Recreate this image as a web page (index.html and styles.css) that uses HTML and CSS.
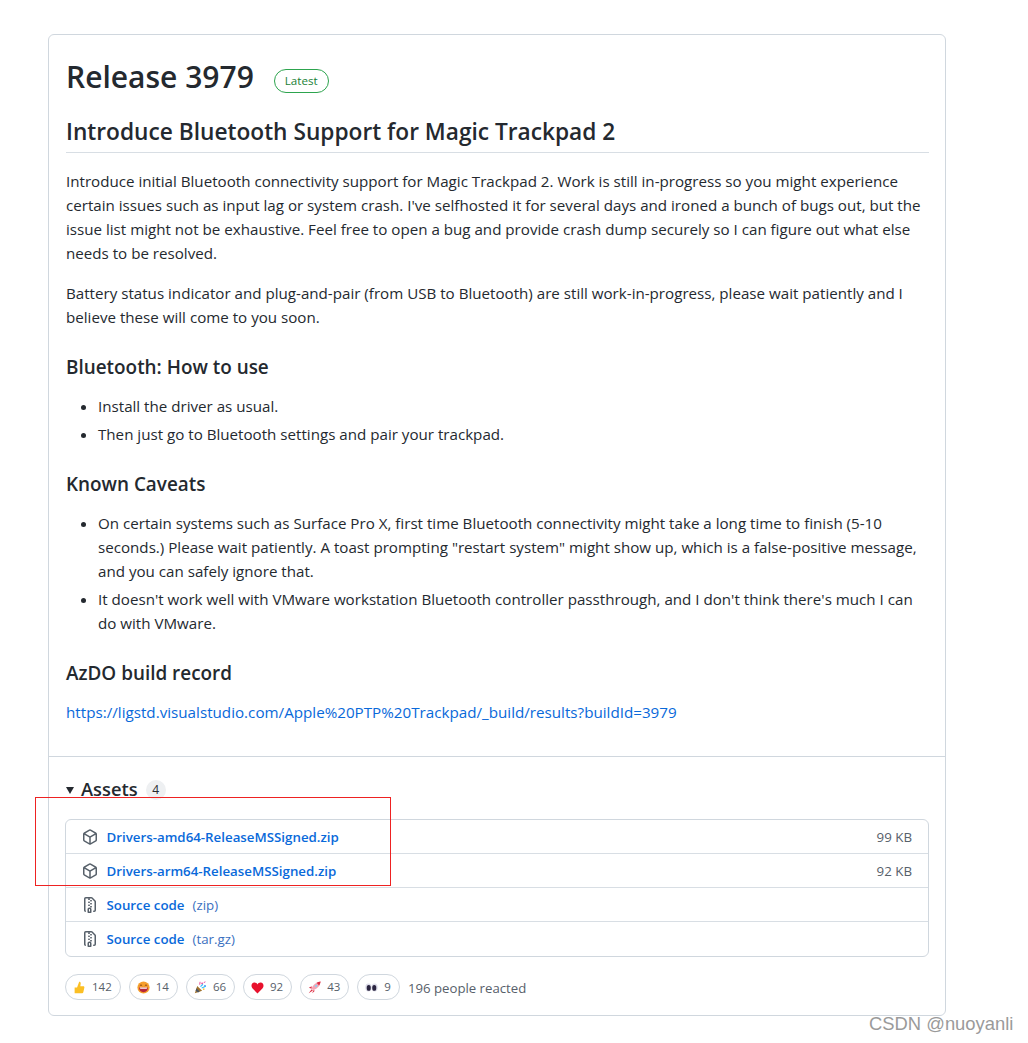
FILE: index.html
```html
<!DOCTYPE html>
<html>
<head>
    <title>Release 3979</title>
    <link rel="stylesheet" href="styles.css">
</head>
<body>
    <div class="release-card">
        <div class="release-body">
            <div class="release-title">
                <h1>Release 3979</h1>
                <span class="label-latest">Latest</span>
            </div>
            <h2 class="section-head">Introduce Bluetooth Support for Magic Trackpad 2</h2>
            <p>Introduce initial Bluetooth connectivity support for Magic Trackpad 2. Work is still in-progress so you might experience<br>certain issues such as input lag or system crash. I've selfhosted it for several days and ironed a bunch of bugs out, but the<br>issue list might not be exhaustive. Feel free to open a bug and provide crash dump securely so I can figure out what else<br>needs to be resolved.</p>
            <p>Battery status indicator and plug-and-pair (from USB to Bluetooth) are still work-in-progress, please wait patiently and I<br>believe these will come to you soon.</p>
            <h3>Bluetooth: How to use</h3>
            <ul>
                <li>Install the driver as usual.</li>
                <li>Then just go to Bluetooth settings and pair your trackpad.</li>
            </ul>
            <h3>Known Caveats</h3>
            <ul>
                <li>On certain systems such as Surface Pro X, first time Bluetooth connectivity might take a long time to finish (5-10<br>seconds.) Please wait patiently. A toast prompting "restart system" might show up, which is a false-positive message,<br>and you can safely ignore that.</li>
                <li>It doesn't work well with VMware workstation Bluetooth controller passthrough, and I don't think there's much I can<br>do with VMware.</li>
            </ul>
            <h3>AzDO build record</h3>
            <p class="last"><a href="#">https://ligstd.visualstudio.com/Apple%20PTP%20Trackpad/_build/results?buildId=3979</a></p>
        </div>

        <div class="assets">
            <div class="assets-head">
                <span class="caret"></span>
                <span class="assets-title">Assets</span>
                <span class="counter">4</span>
            </div>
            <div class="asset-list">
                <div class="asset-row">
                    <svg class="icon" viewBox="0 0 16 16"><path fill="#57606a" fill-rule="evenodd" d="M8.878.392a1.75 1.75 0 00-1.756 0l-5.25 3.045A1.75 1.75 0 001 4.951v6.098c0 .624.332 1.2.872 1.514l5.25 3.045a1.75 1.75 0 001.756 0l5.25-3.045c.54-.313.872-.89.872-1.514V4.951c0-.624-.332-1.2-.872-1.514L8.878.392zM7.875 1.69a.25.25 0 01.25 0l4.63 2.685L8 7.133 3.245 4.375l4.63-2.685zM2.5 5.677v5.372c0 .09.047.171.125.216l4.625 2.683V8.432L2.5 5.677zm6.25 8.271l4.625-2.683a.25.25 0 00.125-.216V5.677L8.75 8.432v5.516z"/></svg>
                    <a class="asset-name" href="#">Drivers-amd64-ReleaseMSSigned.zip</a>
                    <span class="asset-size">99 KB</span>
                </div>
                <div class="asset-row">
                    <svg class="icon" viewBox="0 0 16 16"><path fill="#57606a" fill-rule="evenodd" d="M8.878.392a1.75 1.75 0 00-1.756 0l-5.25 3.045A1.75 1.75 0 001 4.951v6.098c0 .624.332 1.2.872 1.514l5.25 3.045a1.75 1.75 0 001.756 0l5.25-3.045c.54-.313.872-.89.872-1.514V4.951c0-.624-.332-1.2-.872-1.514L8.878.392zM7.875 1.69a.25.25 0 01.25 0l4.63 2.685L8 7.133 3.245 4.375l4.63-2.685zM2.5 5.677v5.372c0 .09.047.171.125.216l4.625 2.683V8.432L2.5 5.677zm6.25 8.271l4.625-2.683a.25.25 0 00.125-.216V5.677L8.75 8.432v5.516z"/></svg>
                    <a class="asset-name" href="#">Drivers-arm64-ReleaseMSSigned.zip</a>
                    <span class="asset-size">92 KB</span>
                </div>
                <div class="asset-row">
                    <svg class="icon" viewBox="0 0 16 16"><path fill="#57606a" fill-rule="evenodd" d="M3.5 1.75a.25.25 0 01.25-.25h3a.75.75 0 000 1.5h.5a.75.75 0 000-1.5h2.086a.25.25 0 01.177.073l2.914 2.914a.25.25 0 01.073.177v8.586a.25.25 0 01-.25.25h-.5a.75.75 0 000 1.5h.5A1.75 1.75 0 0014 13.25V4.664c0-.464-.184-.909-.513-1.237L10.573.513A1.75 1.75 0 009.336 0H3.75A1.75 1.75 0 002 1.75v11.5c0 .649.353 1.214.874 1.515a.75.75 0 10.752-1.298.25.25 0 01-.126-.217V1.75zM8.75 3a.75.75 0 000 1.5h.5a.75.75 0 000-1.5h-.5zM6 5.25a.75.75 0 01.75-.75h.5a.75.75 0 010 1.5h-.5A.75.75 0 016 5.25zm2 1.5A.75.75 0 018.75 6h.5a.75.75 0 010 1.5h-.5A.75.75 0 018 6.75zm-1.25.75a.75.75 0 000 1.5h.5a.75.75 0 000-1.5h-.5zM8 9.75A.75.75 0 018.75 9h.5a.75.75 0 010 1.5h-.5A.75.75 0 018 9.75zm-.75.75a1.75 1.75 0 00-1.75 1.75v3c0 .414.336.75.75.75h2.5a.75.75 0 00.75-.75v-3a1.75 1.75 0 00-1.75-1.75h-.5zM7 12.25a.25.25 0 01.25-.25h.5a.25.25 0 01.25.25v2.25H7v-2.25z"/></svg>
                    <a class="asset-name" href="#">Source code</a>
                    <a class="asset-ext" href="#">(zip)</a>
                </div>
                <div class="asset-row">
                    <svg class="icon" viewBox="0 0 16 16"><path fill="#57606a" fill-rule="evenodd" d="M3.5 1.75a.25.25 0 01.25-.25h3a.75.75 0 000 1.5h.5a.75.75 0 000-1.5h2.086a.25.25 0 01.177.073l2.914 2.914a.25.25 0 01.073.177v8.586a.25.25 0 01-.25.25h-.5a.75.75 0 000 1.5h.5A1.75 1.75 0 0014 13.25V4.664c0-.464-.184-.909-.513-1.237L10.573.513A1.75 1.75 0 009.336 0H3.75A1.75 1.75 0 002 1.75v11.5c0 .649.353 1.214.874 1.515a.75.75 0 10.752-1.298.25.25 0 01-.126-.217V1.75zM8.75 3a.75.75 0 000 1.5h.5a.75.75 0 000-1.5h-.5zM6 5.25a.75.75 0 01.75-.75h.5a.75.75 0 010 1.5h-.5A.75.75 0 016 5.25zm2 1.5A.75.75 0 018.75 6h.5a.75.75 0 010 1.5h-.5A.75.75 0 018 6.75zm-1.25.75a.75.75 0 000 1.5h.5a.75.75 0 000-1.5h-.5zM8 9.75A.75.75 0 018.75 9h.5a.75.75 0 010 1.5h-.5A.75.75 0 018 9.75zm-.75.75a1.75 1.75 0 00-1.75 1.75v3c0 .414.336.75.75.75h2.5a.75.75 0 00.75-.75v-3a1.75 1.75 0 00-1.75-1.75h-.5zM7 12.25a.25.25 0 01.25-.25h.5a.25.25 0 01.25.25v2.25H7v-2.25z"/></svg>
                    <a class="asset-name" href="#">Source code</a>
                    <a class="asset-ext" href="#">(tar.gz)</a>
                </div>
            </div>
            <div class="reactions">
                <span class="reaction">
                    <svg class="emoji" viewBox="0 0 16 16"><path fill="#fbbf24" d="M2 8h3v7H2zM5 8l2.6-7c1.3 0 2 .8 1.9 2L9 6.500h3.700c1 0 1.500.8 1.300 1.600l-1.300 5.800c-.2.7-.7 1.100-1.400 1.100H5z"/></svg>
                    142
                </span>
                <span class="reaction">
                    <svg class="emoji" viewBox="0 0 16 16"><circle cx="8" cy="8" r="7.500" fill="#f59e2c"/><path fill="#b5243c" d="M2.500 8h11c0 3.500-2.500 5.800-5.500 5.800S2.500 11.500 2.500 8z"/><path fill="#fff" d="M3.500 8h9l-.5 1.500H4z"/><path fill="none" stroke="#7a3a10" stroke-width="1.200" d="M3.500 5.800c.8-1 2-1 2.800 0M9.700 5.800c.8-1 2-1 2.800 0"/></svg>
                    14
                </span>
                <span class="reaction">
                    <svg class="emoji" viewBox="0 0 16 16"><path fill="#a0722c" d="M1 15l3-9 6 6z"/><path fill="#4b5563" d="M3 9l4 4-2 1-3-2z"/><circle cx="10" cy="3" r="1.100" fill="#ec4899"/><circle cx="13.500" cy="6" r="1.100" fill="#3b82f6"/><circle cx="12" cy="10" r="1" fill="#fbbf24"/><path fill="none" stroke="#38bdf8" stroke-width="1.400" d="M8 7l3-3M9.500 8.500l5-2"/><path fill="none" stroke="#ec4899" stroke-width="1.200" d="M7 4.500L7.500 1M12 2l2-1"/></svg>
                    66
                </span>
                <span class="reaction">
                    <svg class="emoji" viewBox="0 0 16 16"><path fill="#e8112d" d="M8 15.500L1.700 9C-.4 6.700.5 2 4.200 1.900 5.800 1.800 7.200 2.800 8 4.200 8.800 2.800 10.200 1.800 11.800 1.900c3.700.1 4.600 4.800 2.500 7.100z"/></svg>
                    92
                </span>
                <span class="reaction">
                    <svg class="emoji" viewBox="0 0 16 16"><path fill="#f3a5b5" d="M6 11L4.500 9c1.500-4 5-7.500 11-8.500-1 6-4.500 9.500-9.500 10.500z"/><path fill="#dd2e44" d="M10.500 2.200c1-.7 3-1.400 5-1.700-.3 2-1 4-1.700 5zM4.500 6.500L1 8.200 4.500 9.500zM6.500 11.500l-1.300 3.500 3.300-3zM.8 15.200l3.700-5 1.500 1.500z"/><circle cx="10" cy="6" r="1.400" fill="#8fd0f0"/></svg>
                    43
                </span>
                <span class="reaction">
                    <svg class="emoji" viewBox="0 0 16 16"><ellipse cx="4.200" cy="8" rx="3.800" ry="4.800" fill="#dcdce8"/><ellipse cx="11.800" cy="8" rx="3.800" ry="4.800" fill="#dcdce8"/><ellipse cx="4.600" cy="8.500" rx="2.500" ry="3.500" fill="#2b2540"/><ellipse cx="11.400" cy="8.500" rx="2.500" ry="3.500" fill="#2b2540"/></svg>
                    9
                </span>
                <span class="reaction-note">196 people reacted</span>
            </div>
        </div>
    </div>

    <div class="red-box"></div>
    <div class="watermark">CSDN @nuoyanli</div>
</body>
</html>
```

FILE: styles.css
```css
body {
    margin: 0;
    padding: 34px 0 0 48px;
    font-family: "Open Sans", "Noto Sans", Arial, sans-serif;
    font-size: 15.15px;
    line-height: 24px;
    color: #24292f;
    background: white;
}
a {
    color: #0969da;
    text-decoration: none;
}
.release-card {
    width: 896px;
    height: 980px;
    border: 1px solid #d0d7de;
    border-radius: 6px;
}
.release-body {
    padding: 16px 16px 0 17px;
    height: 705px;
    border-bottom: 1px solid #d0d7de;
}
.release-title {
    display: flex;
    align-items: center;
    height: 52px;
}
.release-title h1 {
    margin: 0;
    font-size: 30px;
    line-height: 52px;
    font-weight: 600;
}
.label-latest {
    margin: 8px 0 0 20px;
    padding: 0 10px;
    height: 22px;
    line-height: 22px;
    border: 1px solid #2da44e;
    border-radius: 12px;
    font-size: 11.6px;
    font-weight: 500;
    color: #1a7f37;
}
.section-head {
    margin: 14px 0 16px;
    padding-bottom: 5px;
    font-size: 22.7px;
    line-height: 30px;
    font-weight: 600;
    border-bottom: 1px solid #d8dee4;
}
p {
    margin: 0 0 16px;
}
.last a {
    font-size: 15.2px;
}
h3 {
    margin: 26px 0 15px;
    font-size: 18.9px;
    line-height: 24px;
    font-weight: 600;
}
ul {
    margin: 0 0 16px;
    padding-left: 32px;
}
li {
    margin-top: 4px;
}
.assets {
    padding: 20px 16px 0 16px;
}
.assets-head {
    display: flex;
    align-items: center;
    height: 24px;
}
.caret {
    width: 0;
    height: 0;
    margin: 2px 7px 0 1px;
    border-left: 4.5px solid transparent;
    border-right: 4.5px solid transparent;
    border-top: 7px solid #24292f;
}
.assets-title {
    font-size: 18.3px;
    font-weight: 600;
}
.counter {
    margin: 2px 0 0 8px;
    width: 20px;
    height: 20px;
    border-radius: 10px;
    background: #eef0f2;
    text-align: center;
    font-size: 12px;
    line-height: 20px;
    font-weight: 500;
}
.asset-list {
    margin-top: 18px;
    border: 1px solid #d0d7de;
    border-radius: 6px;
}
.asset-row {
    display: flex;
    align-items: center;
    height: 33px;
    padding: 0 16px;
    border-top: 1px solid #d8dee4;
    font-size: 13.3px;
}
.asset-row:first-child {
    border-top: none;
}
.asset-row:last-child {
    padding-bottom: 1px;
}
.icon {
    width: 16px;
    height: 16px;
    margin-right: 8.5px;
    flex-shrink: 0;
}
.asset-name {
    font-weight: 600;
}
.asset-ext {
    margin-left: 8px;
    color: #3a6fc0;
}
.asset-size {
    margin-left: auto;
    color: #57606a;
}
.reactions {
    display: flex;
    align-items: center;
    margin-top: 17px;
}
.reaction {
    display: flex;
    align-items: center;
    gap: 6px;
    height: 24px;
    padding: 0 8px 0 7px;
    margin-right: 8px;
    border: 1px solid #d0d7de;
    border-radius: 13px;
    font-size: 11.5px;
    color: #57606a;
}
.emoji {
    width: 13px;
    height: 13px;
}
.reaction-note {
    margin-top: 2px;
    font-size: 13.2px;
    color: #57606a;
}
.red-box {
    position: absolute;
    left: 35px;
    top: 797px;
    width: 354px;
    height: 87px;
    border: 1px solid #ee2222;
}
.watermark {
    position: absolute;
    left: 869px;
    top: 1012px;
    font-family: "Liberation Sans", Arial, sans-serif;
    font-size: 18.4px;
    line-height: 24px;
    color: #9a9a9a;
}
```
